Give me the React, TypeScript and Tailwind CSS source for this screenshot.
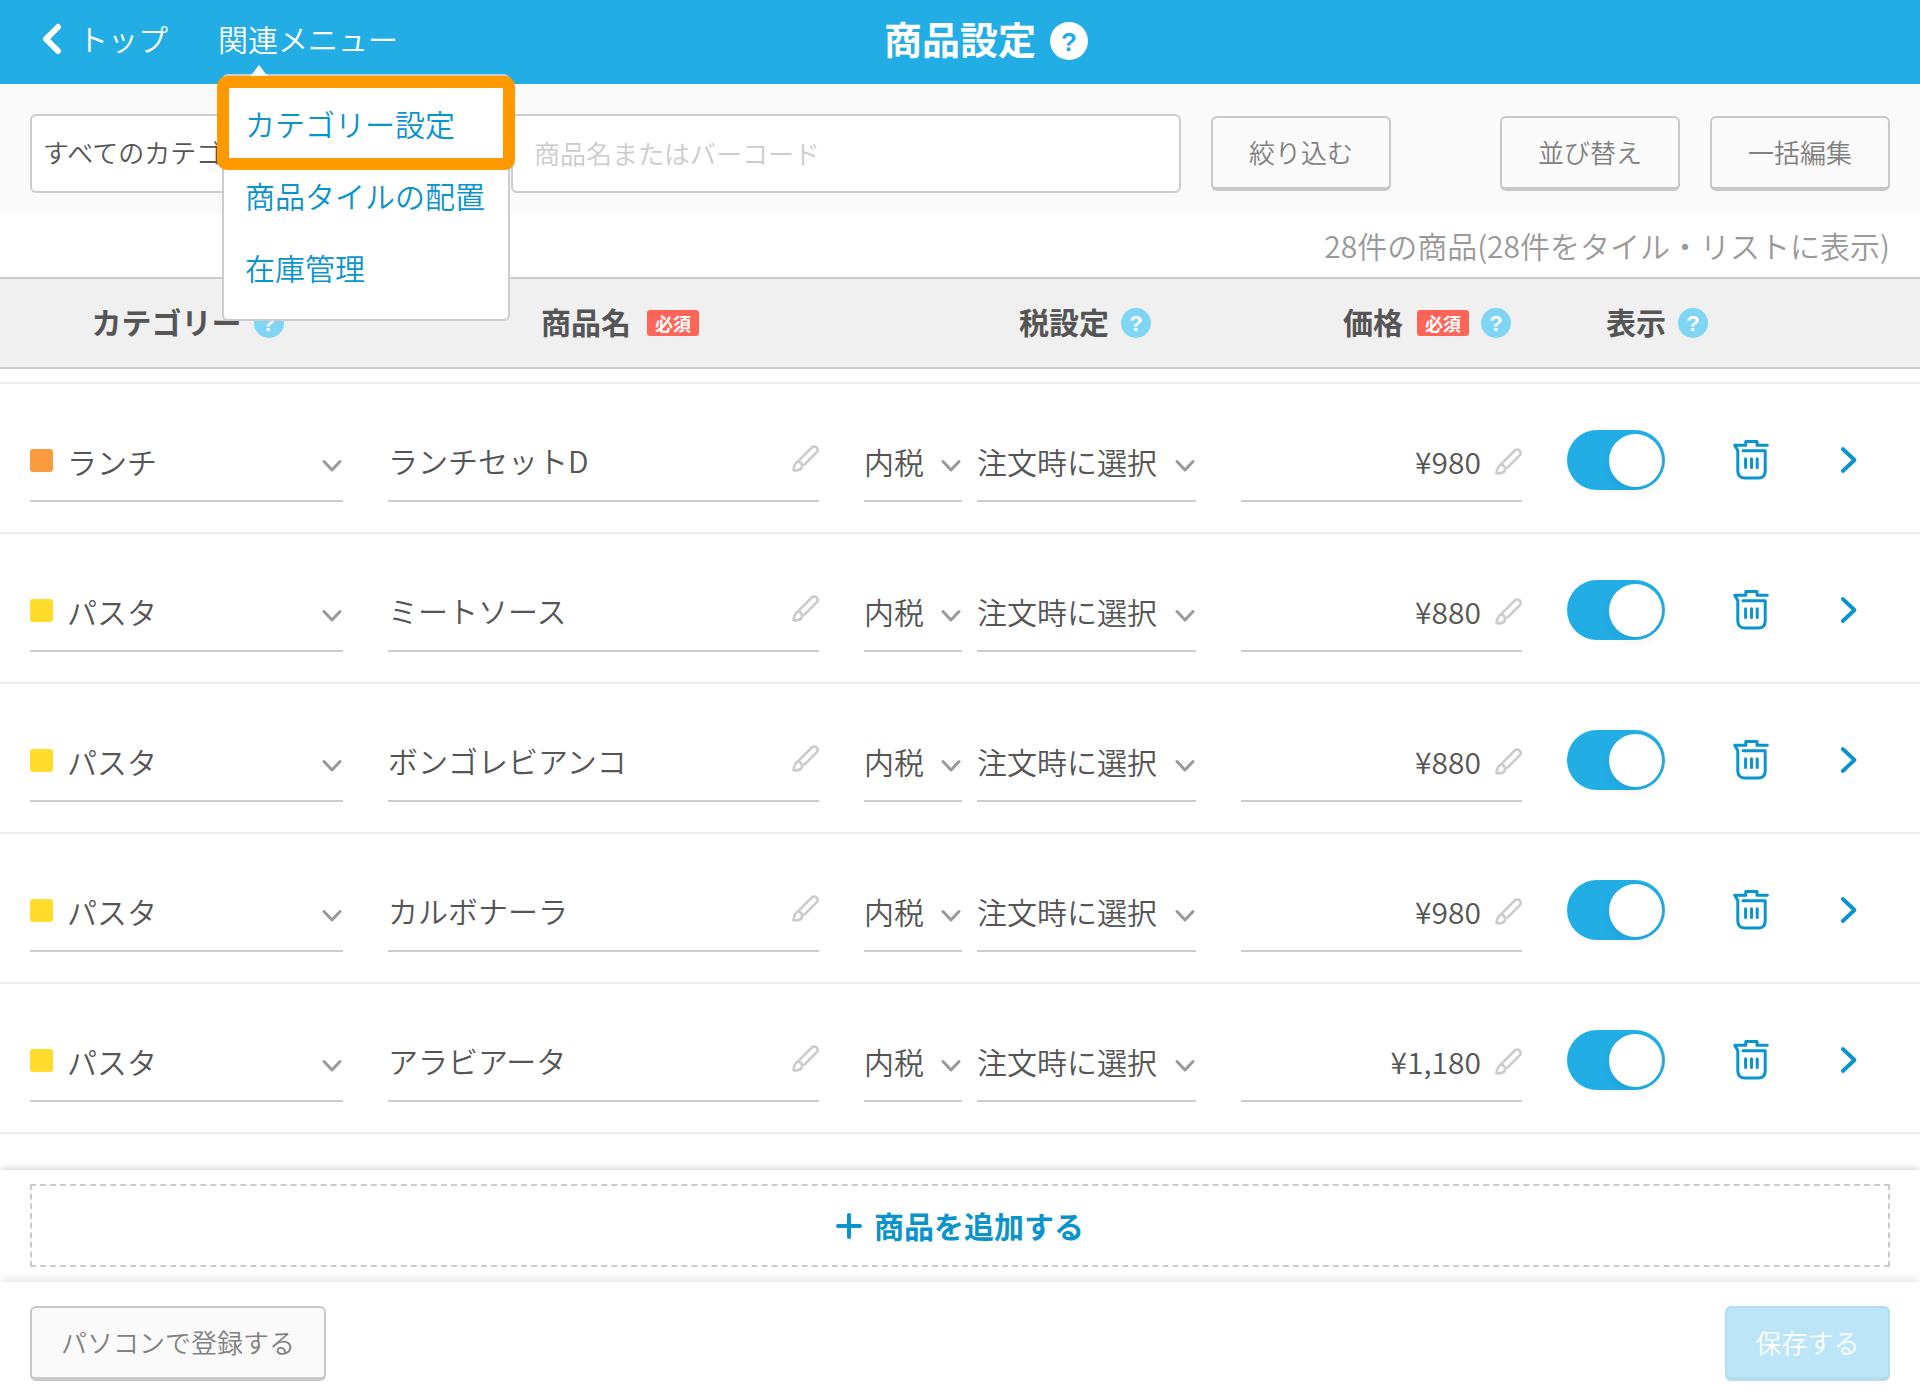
import { useState } from "react";
import type { ReactNode } from "react";

type Product = {
  id: number;
  category: string;
  color: string;
  name: string;
  price: string;
};

const PRODUCTS: Product[] = [
  { id: 1, category: "ランチ", color: "bg-[#fa9b40]", name: "ランチセットD", price: "¥980" },
  { id: 2, category: "パスタ", color: "bg-[#ffdc2b]", name: "ミートソース", price: "¥880" },
  { id: 3, category: "パスタ", color: "bg-[#ffdc2b]", name: "ボンゴレビアンコ", price: "¥880" },
  { id: 4, category: "パスタ", color: "bg-[#ffdc2b]", name: "カルボナーラ", price: "¥980" },
  { id: 5, category: "パスタ", color: "bg-[#ffdc2b]", name: "アラビアータ", price: "¥1,180" },
];

const MENU_ITEMS = ["カテゴリー設定", "商品タイルの配置", "在庫管理"];

function ChevronDown() {
  return (
    <svg width="20" height="14" viewBox="0 0 20 14" fill="none" stroke="#999" strokeWidth="3" strokeLinecap="round" strokeLinejoin="round" aria-hidden="true" className="pointer-events-none mt-2.5 mr-px shrink-0">
      <path d="M2 2.500 10 11l8-8.500" />
    </svg>
  );
}

function Pencil() {
  return (
    <svg width="27" height="27" viewBox="0 0 27 27" fill="none" stroke="#ccc" strokeWidth="2.600" strokeLinecap="round" strokeLinejoin="round" aria-hidden="true" className="shrink-0">
      <path d="M12.500 19.500 24.600 7.400a3.300 3.300 0 0 0 0-4.900a3.300 3.300 0 0 0-4.800 0L6.200 16.200C3.200 17.600 2 20.500 1.500 25.300c4.300.4 7.600-.5 8.500-3.300.5-2.700-1.300-4.900-3.800-5.800" />
    </svg>
  );
}

function Trash() {
  return (
    <svg width="36" height="40" viewBox="0 0 36 40" fill="none" stroke="#0b93cc" strokeWidth="3" strokeLinecap="round" strokeLinejoin="round" aria-hidden="true">
      <path d="M34.300 5.300H24V1.600H12.800v3.700H1.700l3.100 5.200v20.500c0 4.500 2.800 7 7 7h13.400c4.300 0 7-2.500 7-7V10.700H10" />
      <path d="M12.600 18.800v8.600M18.500 18.800v8.600M24.200 18.800v8.600" />
    </svg>
  );
}

function HelpButton({ label }: { label: string }) {
  return (
    <button type="button" aria-label={label} className="flex size-[30px] shrink-0 items-center justify-center rounded-full bg-[#7fd5f4] pt-0.5 font-['Liberation_Sans',sans-serif] text-[22px] leading-none font-bold text-white">
      ?
    </button>
  );
}

function Required() {
  return <span className="rounded-[3px] bg-[#ff6459] px-2 text-[18px] leading-[26px] font-bold text-white">必須</span>;
}

function OutlineButton({ children, className }: { children: ReactNode; className: string }) {
  return (
    <button type="button" className={`h-[75px] rounded-md border-2 border-b-4 border-[#c8c8c8] bg-[#fafafa] pb-0.5 text-[26px] text-[#808080] ${className}`}>
      {children}
    </button>
  );
}

function SelectField({ label, value, className, children }: { label: string; value: string; className: string; children?: ReactNode }) {
  return (
    <div className={`flex h-20 items-center border-b-2 border-[#ccc] ${className}`}>
      {children}
      <select aria-label={label} defaultValue={value} className="h-full min-w-0 flex-1 appearance-none bg-transparent outline-none">
        <option>{value}</option>
      </select>
      <ChevronDown />
    </div>
  );
}

function Toggle({ label }: { label: string }) {
  const [on, setOn] = useState(true);
  return (
    <label className="block w-[98px] cursor-pointer">
      <input type="checkbox" role="switch" aria-label={label} checked={on} onChange={() => setOn(!on)} className="peer sr-only" />
      <span className="flex h-[60px] items-center rounded-full bg-gray-300 p-[3px] peer-checked:justify-end peer-checked:bg-[#22ade5]">
        <span className="size-[53px] rounded-full bg-white shadow-[0_6px_12px_rgba(0,0,0,0.05)]" />
      </span>
    </label>
  );
}

function ProductRow({ product }: { product: Product }) {
  return (
    <tr className="h-[150px] border-b-2 border-[#ededed]">
      <td className="pt-2 pl-[30px]">
        <SelectField label={`${product.name}のカテゴリー`} value={product.category} className="gap-[14px]">
          <span className={`mb-0.5 size-[23px] shrink-0 rounded-[3px] ${product.color}`} />
        </SelectField>
      </td>
      <td className="pt-2 pl-[45px]">
        <div className="flex h-20 items-center border-b-2 border-[#ccc]">
          <input aria-label="商品名" defaultValue={product.name} className="h-full min-w-0 flex-1 bg-transparent pb-0.5 outline-none" />
          <span className="mb-1.5">
            <Pencil />
          </span>
        </div>
      </td>
      <td className="pt-2 pl-[45px]">
        <div className="flex gap-[15px]">
          <SelectField label={`${product.name}の税設定`} value="内税" className="w-[98px]" />
          <SelectField label={`${product.name}の税率`} value="注文時に選択" className="flex-1" />
        </div>
      </td>
      <td className="pt-2 pl-[45px]">
        <div className="flex h-20 items-center gap-[14px] border-b-2 border-[#ccc]">
          <input aria-label="価格" defaultValue={product.price} className="h-full min-w-0 flex-1 bg-transparent text-right outline-none" />
          <Pencil />
        </div>
      </td>
      <td className="pt-1 pl-[45px]">
        <Toggle label={`${product.name}を表示`} />
      </td>
      <td className="pt-1 pl-[23px]">
        <button type="button" aria-label={`${product.name}を削除`} className="block">
          <Trash />
        </button>
      </td>
      <td className="pt-1 pl-10">
        <button type="button" aria-label={`${product.name}の詳細`} className="block">
          <svg width="18" height="28" viewBox="0 0 18 28" fill="none" stroke="#0b93cc" strokeWidth="3.800" strokeLinecap="round" strokeLinejoin="round" aria-hidden="true">
            <path d="M2.800 3 14.500 14 2.800 25" />
          </svg>
        </button>
      </td>
    </tr>
  );
}

export default function App() {
  return (
    <div className="flex min-h-screen flex-col bg-white font-['Noto_Sans_CJK_JP',sans-serif] text-[30px] leading-[44px] font-[350] text-[#555]">
      <header className="grid h-[84px] grid-cols-[1fr_auto_1fr] items-center bg-[#22ade5] text-white">
        <nav className="flex items-center pl-10">
          <a href="#top" className="flex items-center gap-4">
            <svg width="22" height="32" viewBox="0 0 22 32" fill="none" stroke="currentColor" strokeWidth="6" strokeLinecap="round" strokeLinejoin="round" aria-hidden="true" className="mb-1.5">
              <path d="M18 4 6 16l12 12" />
            </svg>
            <span className="pb-2">トップ</span>
          </a>
          <div className="relative ml-[50px]">
            <button type="button" aria-expanded="true" className="block pb-2">関連メニュー</button>
            <div className="absolute top-[58px] left-1 z-10 w-[288px] rounded-md border-2 border-[#ccc] bg-white pt-[11px] pb-4 text-[#0b93cc]">
              <svg width="22" height="14" viewBox="0 0 22 14" aria-hidden="true" className="absolute -top-[12px] left-6">
                <path d="M1 14 11 1l10 13z" fill="#fff" />
              </svg>
              <ul>
                {MENU_ITEMS.map((item) => (
                  <li key={item}>
                    <a href="#menu" className="block pl-[21px] leading-[72px] whitespace-nowrap">{item}</a>
                  </li>
                ))}
              </ul>
              <span aria-hidden="true" className="pointer-events-none absolute top-0 -left-[7px] h-[94px] w-[298px] rounded-[10px] border-[12px] border-[#ff9900]" />
            </div>
          </div>
        </nav>
        <h1 className="pb-2 text-[38px] font-bold">商品設定</h1>
        <div className="flex pb-0.5 pl-[14px]">
          <button type="button" aria-label="商品設定のヘルプ" className="flex size-[38px] items-center justify-center rounded-full bg-white pt-0.5 font-['Liberation_Sans',sans-serif] text-[26px] leading-none font-bold text-[#22ade5]">
            ?
          </button>
        </div>
      </header>

      <form className="flex h-[131px] items-center gap-[30px] bg-[#fafafa] px-[30px] pt-2">
        <div className="flex w-[1151px] gap-6">
          <select aria-label="カテゴリー" className="h-[79px] w-[457px] appearance-none rounded-md border-2 border-[#ccc] bg-white px-[11px] pb-1 text-[26px]">
            <option>すべてのカテゴリー</option>
          </select>
          <input aria-label="商品名またはバーコード" placeholder="商品名またはバーコード" className="h-[79px] min-w-0 flex-1 rounded-md border-2 border-[#ccc] bg-white px-[21px] pb-0.5 text-[26px] placeholder:text-[#ccc]" />
        </div>
        <OutlineButton className="w-[180px]">絞り込む</OutlineButton>
        <OutlineButton className="ml-auto w-[180px]">並び替え</OutlineButton>
        <OutlineButton className="w-[180px]">一括編集</OutlineButton>
      </form>

      <p className="px-[30px] pb-0.5 text-right leading-[60px] text-[#999]">28件の商品(28件をタイル・リストに表示)</p>

      <main className="flex-1">
        <table className="w-full table-fixed border-collapse">
          <colgroup>
            <col className="w-[343px]" />
            <col />
            <col className="w-[377px]" />
            <col className="w-[326px]" />
            <col className="w-[188px]" />
            <col className="w-[90px]" />
            <col className="w-[120px]" />
          </colgroup>
          <thead>
            <tr className="h-[90px] border-y-2 border-[#ccc] bg-[#f0f0f0]">
              <th className="pl-8">
                <div className="flex items-center justify-center gap-3">
                  <span className="pb-1">カテゴリー</span>
                  <HelpButton label="カテゴリーのヘルプ" />
                </div>
              </th>
              <th className="pl-[198px]">
                <div className="flex items-center gap-4">
                  <span className="pb-1">商品名</span>
                  <Required />
                </div>
              </th>
              <th className="pl-[200px]">
                <div className="flex items-center gap-3">
                  <span className="pb-1">税設定</span>
                  <HelpButton label="税設定のヘルプ" />
                </div>
              </th>
              <th className="pr-[11px]">
                <div className="flex items-center justify-end gap-3">
                  <span className="pr-0.5 pb-1">価格</span>
                  <Required />
                  <HelpButton label="価格のヘルプ" />
                </div>
              </th>
              <th className="pl-[84px]">
                <div className="flex items-center gap-3 whitespace-nowrap">
                  <span className="pb-1">表示</span>
                  <HelpButton label="表示のヘルプ" />
                </div>
              </th>
              <td />
              <td />
            </tr>
          </thead>
          <tbody>
            <tr className="h-[15px] border-b-2 border-[#ededed]">
              <td colSpan={7} />
            </tr>
            {PRODUCTS.map((product) => (
              <ProductRow key={product.id} product={product} />
            ))}
          </tbody>
        </table>
      </main>

      <div className="px-[30px] pt-[14px] pb-[15px] shadow-[0_-2px_6px_rgba(0,0,0,0.16)]">
        <button type="button" className="flex h-[83px] w-full items-center justify-center gap-3 border-2 border-dashed border-[#ccc] font-bold text-[#0b93cc]">
          <svg width="26" height="28" viewBox="0 0 26 28" fill="none" stroke="currentColor" strokeWidth="4" strokeLinecap="round" aria-hidden="true">
            <path d="M13 3v22M2 14h22" />
          </svg>
          <span className="pb-0.5">商品を追加する</span>
        </button>
      </div>
      <footer className="flex h-[118px] items-start justify-between bg-white px-[30px] pt-6 shadow-[0_0_12px_rgba(0,0,0,0.16)]">
        <OutlineButton className="w-[296px]">パソコンで登録する</OutlineButton>
        <button type="button" disabled className="h-[75px] w-[165px] rounded-md border-2 border-b-4 border-[#b5dceb] bg-[#bce5f7] pb-0.5 text-[26px] text-white">
          保存する
        </button>
      </footer>
    </div>
  );
}
